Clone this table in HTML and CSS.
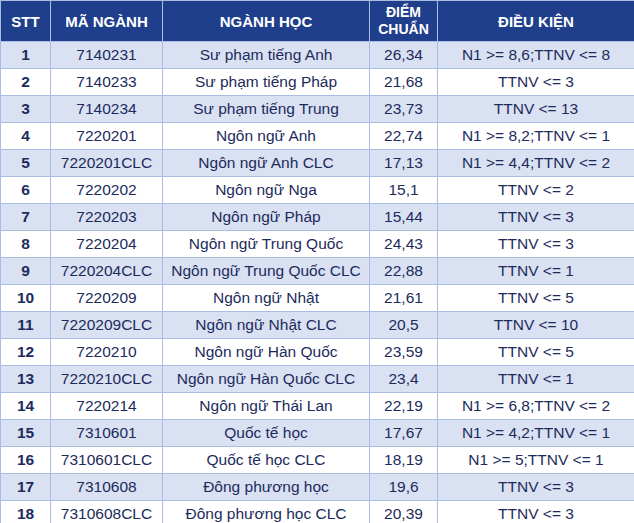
FILE: index.html
```html
<!DOCTYPE html>
<html lang="vi">
<head>
<meta charset="utf-8">
<link rel="stylesheet" href="styles.css">
</head>
<body>
<table class="scores">
  <colgroup>
    <col class="c-stt"><col class="c-ma"><col class="c-nganh"><col class="c-diem"><col class="c-dk">
  </colgroup>
  <thead>
    <tr><th>STT</th><th>MÃ NGÀNH</th><th>NGÀNH HỌC</th><th class="two">ĐIỂM<br>CHUẨN</th><th>ĐIỀU KIỆN</th></tr>
  </thead>
  <tbody>
    <tr><td class="stt">1</td><td>7140231</td><td>Sư phạm tiếng Anh</td><td>26,34</td><td>N1 &gt;= 8,6;TTNV &lt;= 8</td></tr>
    <tr><td class="stt">2</td><td>7140233</td><td>Sư phạm tiếng Pháp</td><td>21,68</td><td>TTNV &lt;= 3</td></tr>
    <tr><td class="stt">3</td><td>7140234</td><td>Sư phạm tiếng Trung</td><td>23,73</td><td>TTNV &lt;= 13</td></tr>
    <tr><td class="stt">4</td><td>7220201</td><td>Ngôn ngữ Anh</td><td>22,74</td><td>N1 &gt;= 8,2;TTNV &lt;= 1</td></tr>
    <tr><td class="stt">5</td><td>7220201CLC</td><td>Ngôn ngữ Anh CLC</td><td>17,13</td><td>N1 &gt;= 4,4;TTNV &lt;= 2</td></tr>
    <tr><td class="stt">6</td><td>7220202</td><td>Ngôn ngữ Nga</td><td>15,1</td><td>TTNV &lt;= 2</td></tr>
    <tr><td class="stt">7</td><td>7220203</td><td>Ngôn ngữ Pháp</td><td>15,44</td><td>TTNV &lt;= 3</td></tr>
    <tr><td class="stt">8</td><td>7220204</td><td>Ngôn ngữ Trung Quốc</td><td>24,43</td><td>TTNV &lt;= 3</td></tr>
    <tr><td class="stt">9</td><td>7220204CLC</td><td>Ngôn ngữ Trung Quốc CLC</td><td>22,88</td><td>TTNV &lt;= 1</td></tr>
    <tr><td class="stt">10</td><td>7220209</td><td>Ngôn ngữ Nhật</td><td>21,61</td><td>TTNV &lt;= 5</td></tr>
    <tr><td class="stt">11</td><td>7220209CLC</td><td>Ngôn ngữ Nhật CLC</td><td>20,5</td><td>TTNV &lt;= 10</td></tr>
    <tr><td class="stt">12</td><td>7220210</td><td>Ngôn ngữ Hàn Quốc</td><td>23,59</td><td>TTNV &lt;= 5</td></tr>
    <tr><td class="stt">13</td><td>7220210CLC</td><td>Ngôn ngữ Hàn Quốc CLC</td><td>23,4</td><td>TTNV &lt;= 1</td></tr>
    <tr><td class="stt">14</td><td>7220214</td><td>Ngôn ngữ Thái Lan</td><td>22,19</td><td>N1 &gt;= 6,8;TTNV &lt;= 2</td></tr>
    <tr><td class="stt">15</td><td>7310601</td><td>Quốc tế học</td><td>17,67</td><td>N1 &gt;= 4,2;TTNV &lt;= 1</td></tr>
    <tr><td class="stt">16</td><td>7310601CLC</td><td>Quốc tế học CLC</td><td>18,19</td><td>N1 &gt;= 5;TTNV &lt;= 1</td></tr>
    <tr><td class="stt">17</td><td>7310608</td><td>Đông phương học</td><td>19,6</td><td>TTNV &lt;= 3</td></tr>
    <tr><td class="stt">18</td><td>7310608CLC</td><td>Đông phương học CLC</td><td>20,39</td><td>TTNV &lt;= 3</td></tr>
  </tbody>
</table>
</body>
</html>
```
FILE: styles.css
```css
html, body {
  margin: 0;
  padding: 0;
  background: #ffffff;
}
.scores {
  width: 634px;
  table-layout: fixed;
  border-collapse: collapse;
  font-family: "Liberation Sans", Arial, sans-serif;
  color: #1c2b5c;
}
.c-stt { width: 50px; }
.c-ma { width: 112px; }
.c-nganh { width: 207px; }
.c-diem { width: 68px; }
.c-dk { width: 197px; }
.scores th {
  background: #1f3f8c;
  color: #ffffff;
  font-weight: bold;
  font-size: 15px;
  height: 40px;
  padding: 0;
  text-align: center;
  vertical-align: middle;
  border: 1px solid #aabde2;
  border-bottom-color: #aabde2;
}
.scores th.two {
  font-size: 14px;
  line-height: 17px;
}
.scores td {
  height: 26px;
  padding: 0;
  text-align: center;
  vertical-align: middle;
  font-size: 15.5px;
  border: 1px solid #a9bce2;
  white-space: nowrap;
}
.scores tbody tr:nth-child(odd) td {
  background: #d9e1f2;
}
.scores tbody tr:nth-child(even) td {
  background: #ffffff;
}
.scores td.stt {
  font-weight: bold;
}
```
